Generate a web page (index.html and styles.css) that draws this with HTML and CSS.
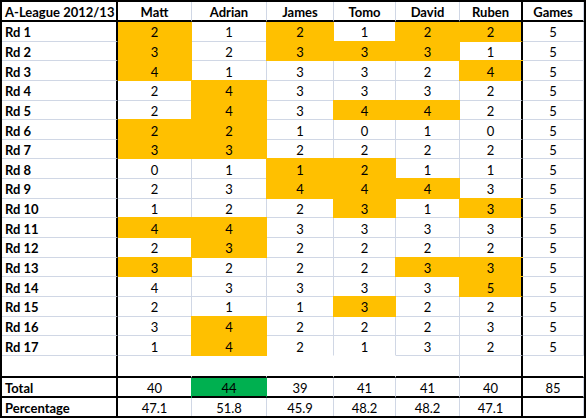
FILE: index.html
```html
<!DOCTYPE html>
<html>
<head>
<meta charset="utf-8">
<title>A-League 2012/13</title>
<link rel="stylesheet" href="styles.css">
</head>
<body>
<div class="sheet">
  <div class="c lab h">A-League 2012/13</div><div class="c b h m">Matt</div><div class="c b h">Adrian</div><div class="c b h">James</div><div class="c b h">Tomo</div><div class="c b h">David</div><div class="c b h rb">Ruben</div><div class="c b h">Games</div>

  <div class="c lab">Rd 1</div><div class="c m o t">2</div><div class="c">1</div><div class="c o t">2</div><div class="c">1</div><div class="c o t">2</div><div class="c o t rb">2</div><div class="c">5</div>
  <div class="c lab">Rd 2</div><div class="c m o">3</div><div class="c">2</div><div class="c o">3</div><div class="c o">3</div><div class="c o">3</div><div class="c rb">1</div><div class="c">5</div>
  <div class="c lab">Rd 3</div><div class="c m o">4</div><div class="c">1</div><div class="c">3</div><div class="c">3</div><div class="c">2</div><div class="c o rb">4</div><div class="c">5</div>
  <div class="c lab">Rd 4</div><div class="c m">2</div><div class="c o">4</div><div class="c">3</div><div class="c">3</div><div class="c">3</div><div class="c rb">2</div><div class="c">5</div>
  <div class="c lab">Rd 5</div><div class="c m">2</div><div class="c o">4</div><div class="c">3</div><div class="c o">4</div><div class="c o">4</div><div class="c rb">2</div><div class="c">5</div>
  <div class="c lab">Rd 6</div><div class="c m o">2</div><div class="c o">2</div><div class="c">1</div><div class="c">0</div><div class="c">1</div><div class="c rb">0</div><div class="c">5</div>
  <div class="c lab">Rd 7</div><div class="c m o">3</div><div class="c o">3</div><div class="c">2</div><div class="c">2</div><div class="c">2</div><div class="c rb">2</div><div class="c">5</div>
  <div class="c lab">Rd 8</div><div class="c m">0</div><div class="c">1</div><div class="c o">1</div><div class="c o">2</div><div class="c">1</div><div class="c rb">1</div><div class="c">5</div>
  <div class="c lab">Rd 9</div><div class="c m">2</div><div class="c">3</div><div class="c o">4</div><div class="c o">4</div><div class="c o">4</div><div class="c rb">3</div><div class="c">5</div>
  <div class="c lab">Rd 10</div><div class="c m">1</div><div class="c">2</div><div class="c">2</div><div class="c o">3</div><div class="c">1</div><div class="c o rb">3</div><div class="c">5</div>
  <div class="c lab">Rd 11</div><div class="c m o">4</div><div class="c o">4</div><div class="c">3</div><div class="c">3</div><div class="c">3</div><div class="c rb">3</div><div class="c">5</div>
  <div class="c lab">Rd 12</div><div class="c m">2</div><div class="c o">3</div><div class="c">2</div><div class="c">2</div><div class="c">2</div><div class="c rb">2</div><div class="c">5</div>
  <div class="c lab">Rd 13</div><div class="c m o">3</div><div class="c">2</div><div class="c">2</div><div class="c">2</div><div class="c o">3</div><div class="c o rb">3</div><div class="c">5</div>
  <div class="c lab">Rd 14</div><div class="c m">4</div><div class="c">3</div><div class="c">3</div><div class="c">3</div><div class="c">3</div><div class="c o rb">5</div><div class="c">5</div>
  <div class="c lab">Rd 15</div><div class="c m">2</div><div class="c">1</div><div class="c">1</div><div class="c o">3</div><div class="c">2</div><div class="c rb">2</div><div class="c">5</div>
  <div class="c lab">Rd 16</div><div class="c m">3</div><div class="c o">4</div><div class="c">2</div><div class="c">2</div><div class="c">2</div><div class="c rb">3</div><div class="c">5</div>
  <div class="c lab">Rd 17</div><div class="c m">1</div><div class="c o">4</div><div class="c nb">2</div><div class="c nb">1</div><div class="c">3</div><div class="c rb">2</div><div class="c">5</div>

  <div class="c e lab"></div><div class="c e m"></div><div class="c e"></div><div class="c e"></div><div class="c e"></div><div class="c e ed"></div><div class="c e rb"></div><div class="c e"></div>

  <div class="c lab tot">Total</div><div class="c m tot">40</div><div class="c g t tot">44</div><div class="c tot">39</div><div class="c tot">41</div><div class="c tot">41</div><div class="c tot rb">40</div><div class="c tot">85</div>

  <div class="c lab last">Percentage</div><div class="c m last">47.1</div><div class="c last">51.8</div><div class="c last">45.9</div><div class="c last">48.2</div><div class="c last">48.2</div><div class="c last rb">47.1</div><div class="c last"></div>
</div>
</body>
</html>
```

FILE: styles.css
```css
* {
  box-sizing: border-box;
}

html,
body {
  margin: 0;
  background: #ffffff;
}

.sheet {
  display: grid;
  grid-template-columns: 116px 74px 75px 67px 62px 64px 63px 61px;
  grid-template-rows: 20px repeat(17, 19.647px) 22px 20px 18px;
  width: 586px;
  border: 2px solid #000000;
  font-family: Lato, "Liberation Sans", sans-serif;
  font-size: 13px;
  color: #000000;
}

.c {
  --sl: -1px;
  --st: -1px;
  display: flex;
  align-items: center;
  justify-content: center;
  padding-top: 2px;
  border-right: 1px solid #d0d7e5;
  border-bottom: 1px solid #d0d7e5;
  white-space: nowrap;
}

.b {
  font-weight: 700;
}

.h {
  border-bottom: 2px solid #000000;
}

.m {
  --sl: 0px;
}

.t {
  --st: 0px;
}

.nb {
  border-bottom-color: #ffffff;
}

.o {
  --f: #ffc000;
}

.g {
  --f: #00b050;
}

.o,
.g {
  background: var(--f);
  border-right-color: var(--f);
  border-bottom-color: var(--f);
  box-shadow: var(--sl) 0 0 var(--f), 0 var(--st) 0 var(--f), var(--sl) var(--st) 0 var(--f);
}

.e {
  border-right-color: transparent;
  border-bottom: 2px solid #000000;
}

.ed {
  border-right-color: #d0d7e5;
}

.tot {
  border-bottom: 2px solid #000000;
}

.last {
  border-bottom: none;
}

.lab {
  justify-content: flex-start;
  padding-left: 3px;
  font-weight: 700;
  border-right: 2px solid #000000;
}

.rb {
  border-right: 2px solid #000000;
}
```
